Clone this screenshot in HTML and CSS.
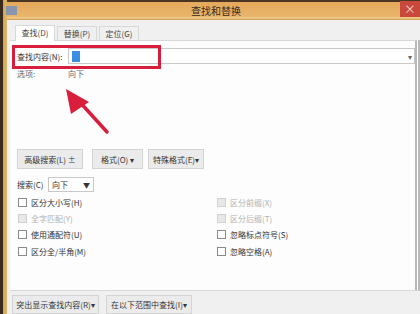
FILE: index.html
```html
<!DOCTYPE html>
<html lang="zh">
<head>
<meta charset="utf-8">
<link rel="stylesheet" href="styles.css">
</head>
<body>
<div class="window">
  <div class="frame-left"></div>
  <div class="main">
    <div class="titlebar">
      <div class="app-icon"></div>
      <div class="title">查找和替换</div>
      <div class="close">×</div>
    </div>
    <div class="content">
      <div class="tabs">
        <div class="tab active">查找(D)</div>
        <div class="tab">替换(P)</div>
        <div class="tab">定位(G)</div>
      </div>
      <div class="panel">
        <div class="row find-row">
          <span class="label">查找内容(N):</span>
          <div class="input"><span class="caret"></span><span class="dd">▾</span></div>
        </div>
        <div class="row opt-row">
          <span class="label">选项:</span>
          <span class="val">向下</span>
        </div>
        <div class="btn-row">
          <div class="btn b1">高级搜索(L) ±</div>
          <div class="btn b2">格式(O) ▾</div>
          <div class="btn b3">特殊格式(E)▾</div>
        </div>
        <div class="search-row">
          <span class="label">搜索(C)</span>
          <div class="select">向下<span class="tri">▼</span></div>
        </div>
        <div class="checks">
          <div class="chk"><span class="box"></span>区分大小写(H)</div>
          <div class="chk dis"><span class="box"></span>区分前缀(X)</div>
          <div class="chk dis"><span class="box"></span>全字匹配(Y)</div>
          <div class="chk dis"><span class="box"></span>区分后缀(T)</div>
          <div class="chk"><span class="box"></span>使用通配符(U)</div>
          <div class="chk"><span class="box"></span>忽略标点符号(S)</div>
          <div class="chk"><span class="box"></span>区分全/半角(M)</div>
          <div class="chk"><span class="box"></span>忽略空格(A)</div>
        </div>
      </div>
      <div class="footer">
        <div class="btn f1">突出显示查找内容(R)▾</div>
        <div class="btn f2">在以下范围中查找(I)▾</div>
      </div>
    </div>
  </div>
  <div class="highlight"></div>
  <svg class="arrow" width="60" height="60" viewBox="0 0 60 60">
    <line x1="44" y1="43" x2="14" y2="10" stroke="#d81e3c" stroke-width="3.5" stroke-linecap="round"/>
    <polygon points="3,0 8,25 26,13" fill="#d81e3c"/>
  </svg>
</div>
</body>
</html>
```
FILE: styles.css
```css
* { box-sizing: border-box; }
html, body { margin: 0; padding: 0; }
body {
  width: 420px; height: 314px; overflow: hidden;
  font-family: "Noto Sans CJK SC", "Liberation Sans", sans-serif;
  font-size: 8px; color: #333;
}
.window { position: relative; display: flex; width: 420px; height: 314px; }
.frame-left {
  width: 7px; flex: none;
  background: linear-gradient(to right, #3b2a1e 0, #3b2a1e 3px, #d2a552 3px, #e0b868 7px);
}
.main { flex: 1; display: flex; flex-direction: column; min-width: 0; }
.titlebar {
  height: 20px; flex: none; display: flex; align-items: center; position: relative;
  background: linear-gradient(#4a3623 0, #4a3623 2px, #e4a95c 2px, #e9b46a 16px, #f1cd8a 18px, #c99a50 20px);
}
.app-icon { width: 11px; height: 9px; margin-left: -1px; background: #6f8fc0; opacity: .8; }
.title { flex: 1; text-align: center; font-size: 10px; color: #3a2a1a; padding-left: 15px; }
.close {
  width: 20px; height: 16px; align-self: flex-start; margin-top: 1px;
  background: #c9483c; color: #f4d4cc; text-align: center; font-size: 12px; line-height: 15px;
}
.content { flex: 1; background: #f0f0f0; padding: 5px 0 0 3px; display: flex; flex-direction: column; }
.tabs { display: flex; gap: 2px; height: 16px; padding-left: 5px; }
.tab {
  width: 40px; height: 15px; margin-top: 1px; text-align: center; line-height: 14px;
  border: 1px solid #d8d8d8; border-bottom: none; background: #f0f0f0; color: #444;
}
.tab.active { background: #fff; height: 16px; margin-top: 0; position: relative; z-index: 1; }
.panel {
  height: 251px; flex: none; background: #fdfdfd; margin-top: -1px;
  border: 1px solid #d8d8d8; border-right: 5px double #b8b8b8; border-left: none;
  padding: 7px 0 0 7px;
}
.row { display: flex; align-items: center; }
.find-row { height: 16px; }
.find-row .label { width: 51px; }
.input {
  flex: 1; height: 16px; border: 1px solid #c8c8c8; background: #fff; position: relative;
  display: flex; align-items: center; justify-content: space-between; padding: 0 2px 0 3px;
}
.caret { width: 8px; height: 11px; background: #3a8de0; }
.dd { color: #666; font-size: 8px; }
.opt-row { height: 14px; margin-top: 2px; }
.opt-row .label { width: 51px; color: #666; }
.opt-row .val { color: #666; }
.btn-row { display: flex; margin-top: 69px; height: 21px; }
.btn {
  height: 20px; border: 1px solid #d4d4d4; background: #ebebeb;
  display: flex; align-items: center; justify-content: center; white-space: nowrap; color: #333;
}
.b1 { width: 66px; }
.b2 { width: 51px; margin-left: 9px; }
.b3 { width: 56px; margin-left: 5px; }
.search-row { display: flex; align-items: center; margin-top: 7px; height: 15px; }
.search-row .label { width: 31px; }
.select {
  width: 46px; height: 15px; border: 1px solid #c8c8c8; background: #fff;
  display: flex; align-items: center; justify-content: space-between; padding: 0 3px;
}
.tri { font-size: 7px; }
.checks {
  display: grid; grid-template-columns: 199px 1fr; grid-auto-rows: 16.4px;
  margin-top: 2px;
}
.chk { display: flex; align-items: center; padding-left: 1px; }
.box { width: 9px; height: 9px; border: 1px solid #8a8a8a; background: #fff; margin-right: 4px; }
.chk.dis { color: #b0b0b0; }
.chk.dis .box { border-color: #d0d0d0; background: #e8e8e8; }
.footer { flex: 1; display: flex; padding: 4px 0 0 2px; gap: 7px; }
.f1 { width: 87px; height: 19px; }
.f2 { width: 86px; height: 19px; }
.highlight {
  position: absolute; left: 12px; top: 45px; width: 149px; height: 24px;
  border: 3px solid #d81e3c;
}
.arrow { position: absolute; left: 63px; top: 89px; }
```
